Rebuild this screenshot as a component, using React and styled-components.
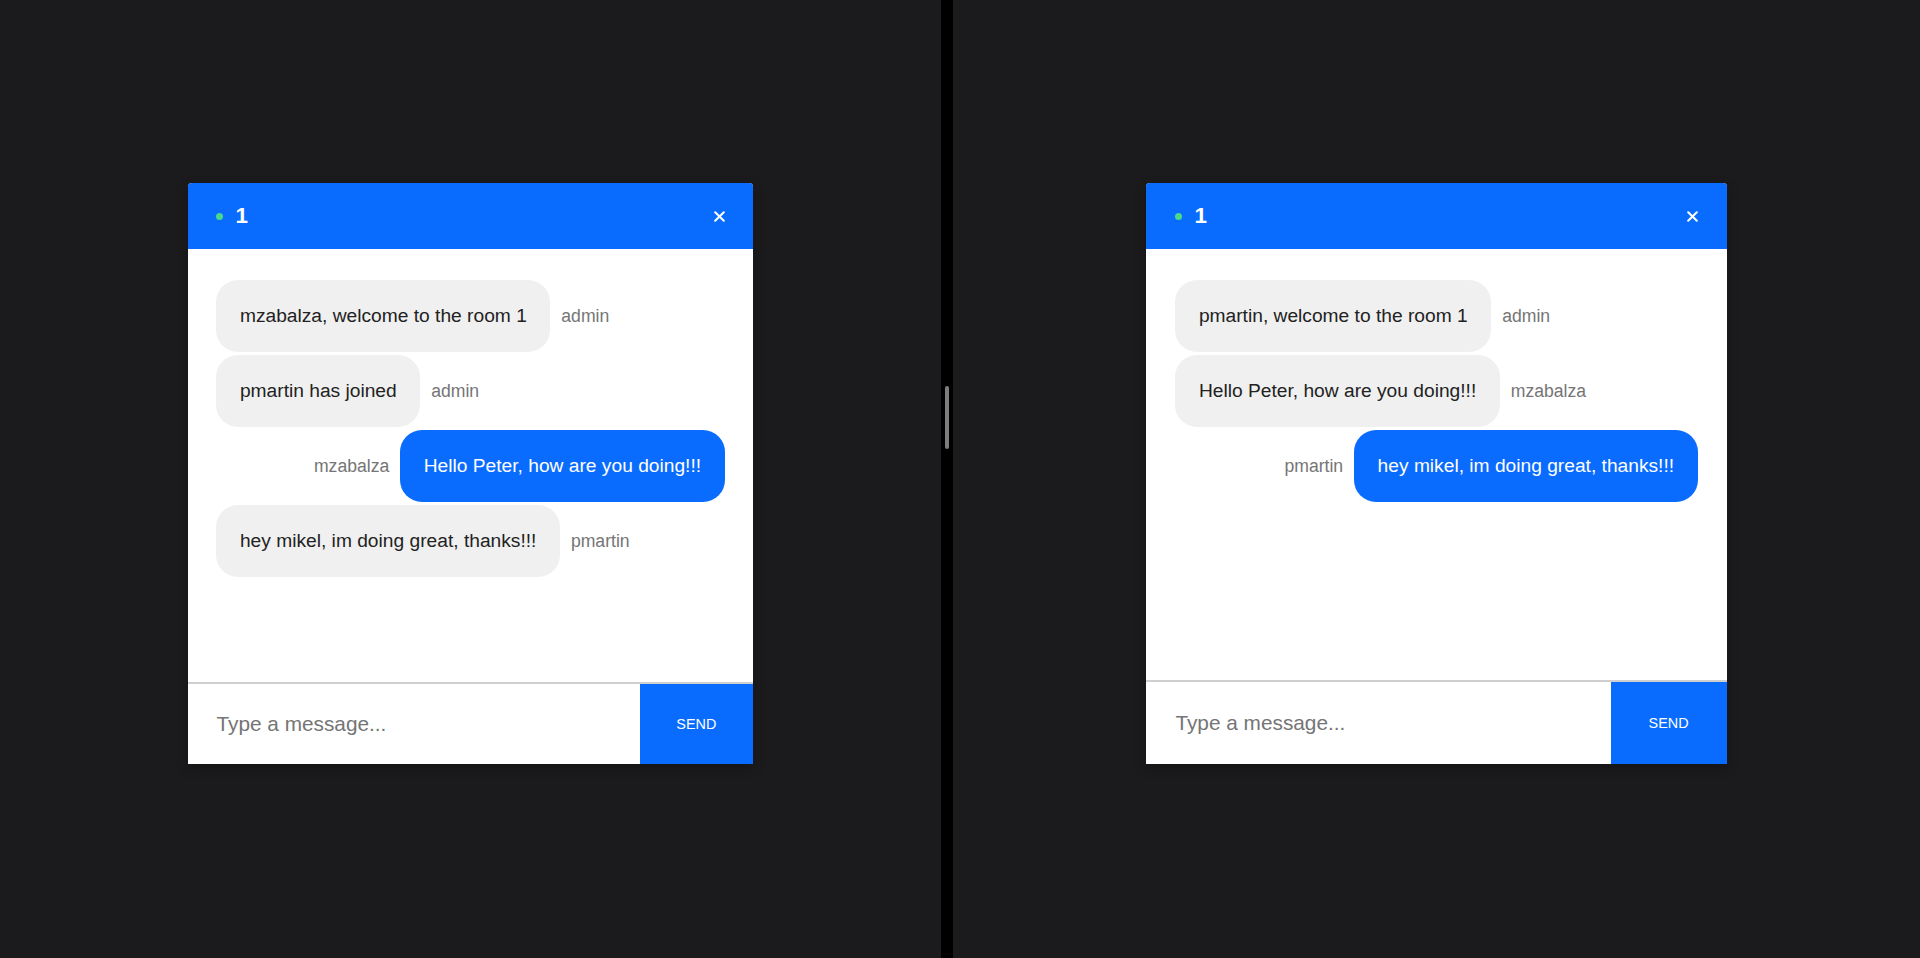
import React from 'react';
import styled, { createGlobalStyle } from 'styled-components';

const GlobalStyle = createGlobalStyle`
  html, body {
    margin: 0;
    padding: 0;
    background: #1b1b1d;
    font-family: "Liberation Sans", Arial, Helvetica, sans-serif;
  }
`;

const Screen = styled.div`
  display: flex;
  width: 1920px;
  height: 958px;
  overflow: hidden;
  background: #1b1b1d;
`;

const Pane = styled.div`
  display: flex;
  justify-content: center;
  align-items: flex-start;
  width: ${(p) => p.$width}px;
  padding-top: 183px;
  box-sizing: border-box;
`;

const Divider = styled.div`
  display: flex;
  justify-content: center;
  width: 12px;
  padding-top: 386px;
  background: #000;
  box-sizing: border-box;
`;

const Handle = styled.div`
  width: 4px;
  height: 63px;
  border-radius: 2px;
  background: #7d7d7d;
`;

const Card = styled.div`
  display: flex;
  flex-direction: column;
  width: 60%;
  height: 581px;
  background: #fff;
  border-radius: 4px 4px 0 0;
  overflow: hidden;
  box-shadow: 0 4px 12px rgba(0, 0, 0, 0.25);
`;

const Header = styled.div`
  display: flex;
  align-items: center;
  height: 66px;
  padding: 0 5%;
  background: #0a6cff;
  color: #fff;
  flex-shrink: 0;
`;

const Dot = styled.span`
  width: 7px;
  height: 7px;
  border-radius: 50%;
  background: #4ad98a;
  margin-right: 12px;
`;

const Room = styled.span`
  font-size: 22.4px;
  font-weight: bold;
  flex: 1;
`;

const Close = styled.button`
  display: flex;
  align-items: center;
  justify-content: center;
  width: 11px;
  height: 12px;
  padding: 0;
  border: none;
  background: none;
  cursor: pointer;
`;

const Messages = styled.div`
  display: flex;
  flex-direction: column;
  gap: 3px;
  flex: 1;
  padding: 31px 5% 0;
  border-bottom: 2px solid #cfcfcf;
`;

const Row = styled.div`
  display: flex;
  align-items: center;
  justify-content: ${(p) => (p.$mine ? 'flex-end' : 'flex-start')};
  gap: 11px;
`;

const Bubble = styled.div`
  padding: 24px 23.5px;
  line-height: 24px;
  font-size: 19.2px;
  border-radius: 22px;
  background: ${(p) => (p.$mine ? '#0a6cff' : '#f0f0f0')};
  color: ${(p) => (p.$mine ? '#fff' : '#222')};
  white-space: nowrap;
`;

const Sender = styled.span`
  font-size: 17.6px;
  color: #757575;
`;

const Composer = styled.div`
  display: flex;
  height: ${(p) => p.$height}px;
  flex-shrink: 0;
`;

const Input = styled.input`
  flex: 1;
  min-width: 0;
  padding: 0 5%;
  border: none;
  outline: none;
  font-family: inherit;
  font-size: 20.8px;
  color: #222;
  &::placeholder {
    color: #757575;
  }
`;

const Send = styled.button`
  width: 20%;
  border: none;
  background: #0a6cff;
  color: #fff;
  font-family: inherit;
  font-size: 14.4px;
  cursor: pointer;
`;

const CloseIcon = () => (
  <svg width="11" height="11" viewBox="0 0 11 11">
    <path d="M1.2 1.2L9.8 9.8M9.8 1.2L1.2 9.8" stroke="#fff" strokeWidth="2" strokeLinecap="round" />
  </svg>
);

const ChatWindow = ({ composerHeight, messages }) => (
  <Card>
    <Header>
      <Dot />
      <Room>1</Room>
      <Close aria-label="close">
        <CloseIcon />
      </Close>
    </Header>
    <Messages>
      {messages.map((m, i) => (
        <Row key={i} $mine={m.mine}>
          {m.mine && <Sender>{m.from}</Sender>}
          <Bubble $mine={m.mine}>{m.text}</Bubble>
          {!m.mine && <Sender>{m.from}</Sender>}
        </Row>
      ))}
    </Messages>
    <Composer $height={composerHeight}>
      <Input placeholder="Type a message..." />
      <Send>SEND</Send>
    </Composer>
  </Card>
);

const left = [
  { from: 'admin', text: 'mzabalza, welcome to the room 1' },
  { from: 'admin', text: 'pmartin has joined' },
  { from: 'mzabalza', text: 'Hello Peter, how are you doing!!!', mine: true },
  { from: 'pmartin', text: 'hey mikel, im doing great, thanks!!!' },
];

const right = [
  { from: 'admin', text: 'pmartin, welcome to the room 1' },
  { from: 'mzabalza', text: 'Hello Peter, how are you doing!!!' },
  { from: 'pmartin', text: 'hey mikel, im doing great, thanks!!!', mine: true },
];

const App = () => (
  <>
    <GlobalStyle />
    <Screen>
      <Pane $width={941}>
        <ChatWindow composerHeight={80} messages={left} />
      </Pane>
      <Divider>
        <Handle />
      </Divider>
      <Pane $width={967}>
        <ChatWindow composerHeight={82} messages={right} />
      </Pane>
    </Screen>
  </>
);

export default App;
